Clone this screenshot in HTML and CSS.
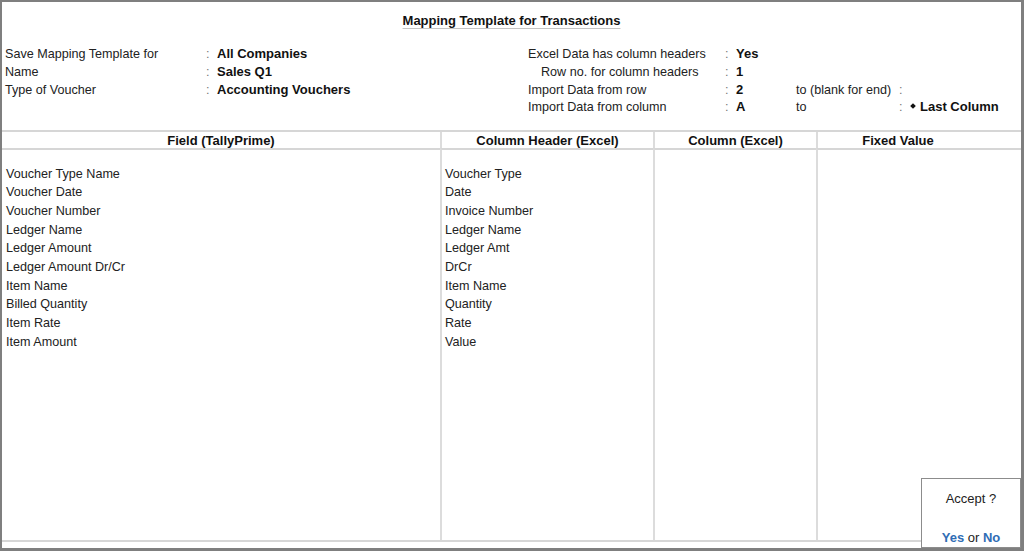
FILE: index.html
```html
<!DOCTYPE html>
<html>
<head>
<meta charset="utf-8">
<title>Mapping Template for Transactions</title>
<link rel="stylesheet" href="styles.css">
</head>
<body>
<div class="frame">
  <div class="title"><span>Mapping Template for Transactions</span></div>

  <div class="info">
    <div class="info-left">
      <div class="lbl">Save Mapping Template for</div><div class="colon">:</div><div class="val">All Companies</div>
      <div class="lbl">Name</div><div class="colon">:</div><div class="val">Sales Q1</div>
      <div class="lbl">Type of Voucher</div><div class="colon">:</div><div class="val">Accounting Vouchers</div>
    </div>
    <div class="info-right">
      <div class="lbl">Excel Data has column headers</div><div class="colon">:</div><div class="val">Yes</div><div class="rest"></div>
      <div class="lbl indent">Row no. for column headers</div><div class="colon">:</div><div class="val">1</div><div class="rest"></div>
      <div class="lbl">Import Data from row</div><div class="colon">:</div><div class="val">2</div><div class="lbl">to (blank for end)</div><div class="colon">:</div><div class="val"></div>
      <div class="lbl">Import Data from column</div><div class="colon">:</div><div class="val">A</div><div class="lbl">to</div><div class="colon">:</div><div class="val"><span class="diamond"></span>Last Column</div>
    </div>
  </div>

  <div class="table">
    <div class="hcell c1">Field (TallyPrime)</div>
    <div class="hcell c2">Column Header (Excel)</div>
    <div class="hcell c3">Column (Excel)</div>
    <div class="hcell c4">Fixed Value</div>

    <div class="bcell c1">
      <div class="row">Voucher Type Name</div>
      <div class="row">Voucher Date</div>
      <div class="row">Voucher Number</div>
      <div class="row">Ledger Name</div>
      <div class="row">Ledger Amount</div>
      <div class="row">Ledger Amount Dr/Cr</div>
      <div class="row">Item Name</div>
      <div class="row">Billed Quantity</div>
      <div class="row">Item Rate</div>
      <div class="row">Item Amount</div>
    </div>
    <div class="bcell c2">
      <div class="row">Voucher Type</div>
      <div class="row">Date</div>
      <div class="row">Invoice Number</div>
      <div class="row">Ledger Name</div>
      <div class="row">Ledger Amt</div>
      <div class="row">DrCr</div>
      <div class="row">Item Name</div>
      <div class="row">Quantity</div>
      <div class="row">Rate</div>
      <div class="row">Value</div>
    </div>
    <div class="bcell c3"></div>
    <div class="bcell c4"></div>
  </div>

  <div class="popup">
    <div class="q">Accept ?</div>
    <div class="answers"><span class="opt">Yes</span> or <span class="opt">No</span></div>
  </div>
</div>
</body>
</html>
```
FILE: styles.css
```css
html, body {
  margin: 0;
  padding: 0;
  background: #ffffff;
}

body {
  font-family: "Liberation Sans", Arial, sans-serif;
  font-size: 12.6px;
  color: #222222;
}

.frame {
  position: relative;
  box-sizing: border-box;
  width: 1024px;
  height: 551px;
  border-style: solid;
  border-color: #7f7f7f;
  border-width: 2px 3px 3px 2px;
  background: #ffffff;
  display: flex;
  flex-direction: column;
  overflow: hidden;
}

.title {
  padding-top: 9.5px;
  height: 18px;
  line-height: 18px;
  text-align: center;
  font-size: 13px;
  font-weight: bold;
  color: #111111;
}

.title span {
  text-decoration: underline;
  text-decoration-color: #c4c4c4;
  text-decoration-thickness: 1px;
  text-underline-offset: 3px;
}

.info {
  margin-top: 15.5px;
  display: flex;
  height: 71.2px;
}

.info-left {
  width: 526px;
  padding-left: 3px;
  box-sizing: border-box;
  display: grid;
  grid-template-columns: 200px 12px auto;
  grid-auto-rows: 17.8px;
  align-content: start;
  align-items: baseline;
}

.info-right {
  display: grid;
  grid-template-columns: 196px 12px 60px 102px 12px auto;
  grid-auto-rows: 17.8px;
  align-content: start;
  align-items: baseline;
}

.lbl, .colon, .val {
  line-height: 17.8px;
  white-space: nowrap;
}

.lbl {
  color: #222222;
}

.lbl.indent {
  padding-left: 13px;
}

.colon {
  color: #777777;
  padding-left: 1px;
}

.val {
  font-size: 13px;
  font-weight: bold;
  color: #111111;
}

.rest {
  grid-column: span 3;
}

.diamond {
  display: inline-block;
  width: 4px;
  height: 4px;
  background: #111111;
  transform: rotate(45deg);
  margin: 0 5px 0 1px;
  vertical-align: 3px;
}

.table {
  margin-top: 13.8px;
  margin-bottom: 6px;
  flex: 1;
  display: grid;
  grid-template-columns: 438px 213px 163px 1fr;
  grid-template-rows: 16px 1fr;
  border-top: 2px solid #d6d6d6;
  border-bottom: 2px solid #d6d6d6;
}

.hcell {
  box-sizing: border-box;
  padding-top: 2px;
  line-height: 13px;
  font-size: 13px;
  font-weight: bold;
  color: #111111;
  text-align: center;
  white-space: nowrap;
}

.hcell.c4 {
  padding-right: 43px;
}

.table .c2,
.table .c3,
.table .c4 {
  border-left: 2px solid #dcdcdc;
}

.bcell {
  border-top: 2px solid #d6d6d6;
  padding-top: 14.6px;
}

.bcell.c1 {
  padding-left: 4px;
}

.bcell.c2 {
  padding-left: 3px;
}

.row {
  line-height: 18.7px;
  height: 18.7px;
  white-space: nowrap;
}

.popup {
  position: absolute;
  right: 0;
  bottom: 0;
  width: 100px;
  height: 70px;
  box-sizing: border-box;
  border: 1px solid #8c8c8c;
  background: #ffffff;
  text-align: center;
  font-size: 13px;
  z-index: 2;
}

.q {
  margin-top: 11.5px;
  line-height: 16px;
  color: #222222;
}

.answers {
  margin-top: 23.5px;
  line-height: 16px;
  color: #222222;
}

.opt {
  font-weight: bold;
  color: #2f6db5;
}
```
